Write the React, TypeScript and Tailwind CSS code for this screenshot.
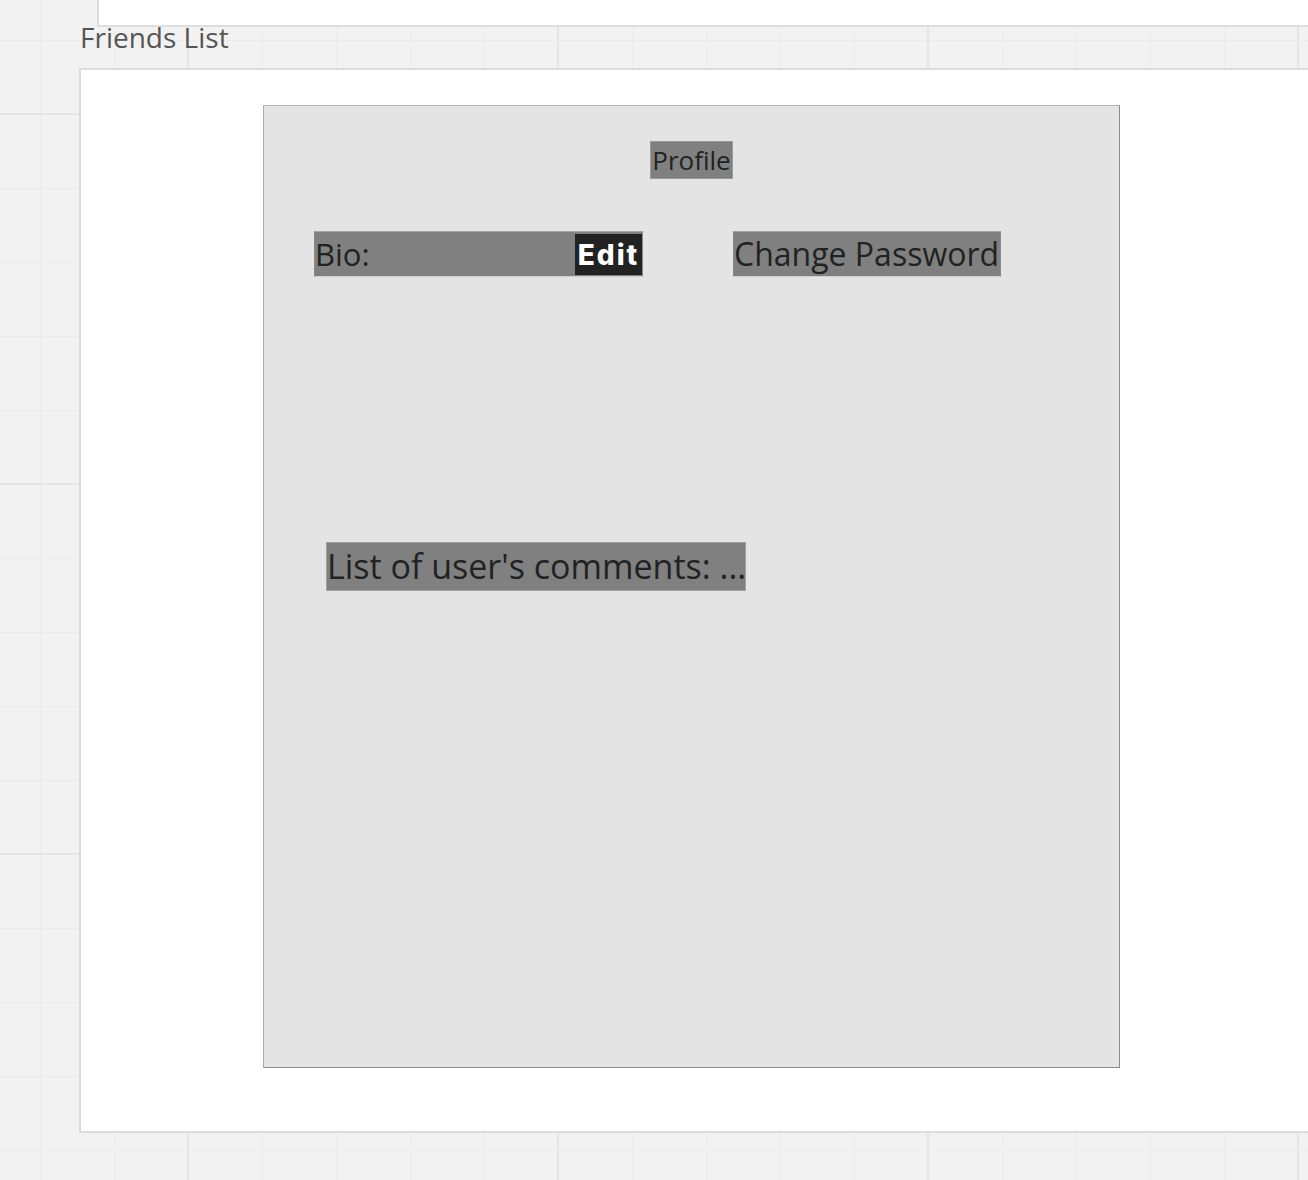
export default function App() {
  return (
    <div
      className="w-[1308px] h-[1180px] overflow-hidden flex flex-col bg-[#f2f2f2] [background-image:linear-gradient(to_right,#e5e5e5_2px,transparent_2px),linear-gradient(to_bottom,#e5e5e5_2px,transparent_2px),linear-gradient(to_right,#ebebeb_1px,transparent_1px),linear-gradient(to_bottom,#ebebeb_1px,transparent_1px)] [background-size:370px_370px,370px_370px,74px_74px,74px_74px] [background-position:187px_0,0_113px,40px_0,0_40px]"
      style={{ fontFamily: '"Open Sans", "Liberation Sans", sans-serif' }}
    >
      {/* frame peeking in above */}
      <div className="ml-[97px] h-[27px] w-[1300px] shrink-0 bg-white border-l-2 border-b-2 border-[#dedede]" />

      {/* frame label */}
      <div className="h-[41px] shrink-0 pl-[80px]">
        <div className="-mt-[4px] text-[28px] leading-[28px] text-[#555]">Friends List</div>
      </div>

      {/* main frame */}
      <div className="ml-[79px] h-[1065px] w-[1300px] shrink-0 bg-white border-2 border-r-0 border-[#dcdcdc]">
        <div className="ml-[182px] mt-[35px] w-[857px] h-[963px] flex flex-col bg-[#e4e4e4] border border-t-[#b4b4b4] border-l-[#ababab] border-r-[#8c8c8c] border-b-[#8c8c8c]">
          <div className="mt-[35px] self-center w-[83px] h-[38px] flex items-center justify-center bg-[#808080] border border-[#9a9a9a] text-[26px] text-[#222]">
            Profile
          </div>

          <div className="mt-[52px] flex">
            <div className="ml-[50px] w-[329px] h-[46px] flex items-center justify-between bg-[#808080] border border-t-[#a6a6a6] border-x-[#8a8a8a] border-b-[#d0d0d0] text-[31px] text-[#222]">
              <span>Bio:</span>
              <span
                className="w-[67px] h-[41px] mt-[1px] flex items-center justify-center bg-[#222] text-white text-[28px] font-extrabold tracking-[2px]"
                style={{ fontFamily: "Inter, sans-serif" }}
              >
                Edit
              </span>
            </div>
            <div className="ml-[90px] w-[268px] h-[46px] flex items-center bg-[#808080] border border-t-[#a6a6a6] border-x-[#8a8a8a] border-b-[#d0d0d0] text-[32px] text-[#222] whitespace-nowrap">
              <span>Change Password</span>
            </div>
          </div>

          <div className="mt-[265px] ml-[62px] w-[420px] h-[49px] flex items-center bg-[#808080] border border-[#a0a0a0] text-[34px] text-[#222] whitespace-nowrap">
            <span>List of user's comments: ...</span>
          </div>
        </div>
      </div>
    </div>
  );
}
